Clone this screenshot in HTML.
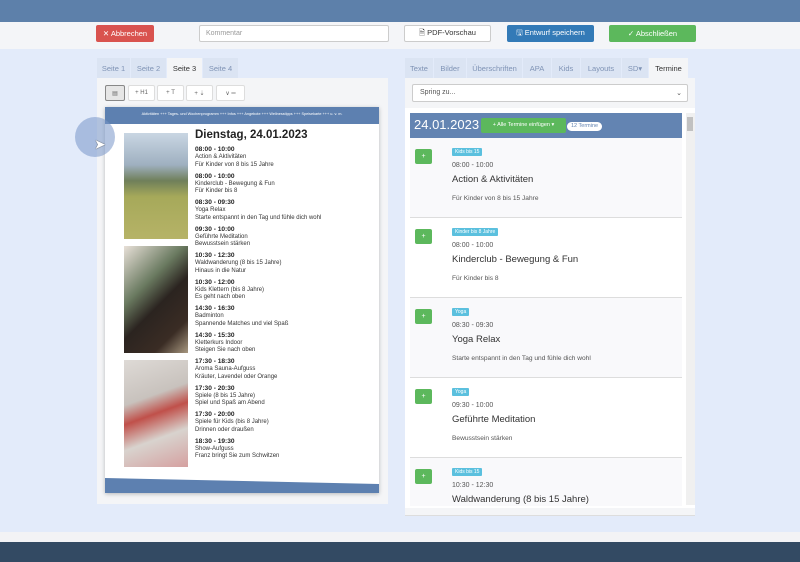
<!DOCTYPE html>
<html><head><meta charset="utf-8"><style>
*{box-sizing:border-box;margin:0;padding:0}
body{width:800px;height:562px;overflow:hidden;background:#e3ebfa;font-family:"Liberation Sans",sans-serif;position:relative}
.a{position:absolute}
.btn{position:absolute;font-size:7.5px;color:#fff;border-radius:2px;display:flex;align-items:center;justify-content:center}
.tab{position:absolute;top:58px;height:20px;font-size:7.5px;color:#7f93b5;display:flex;align-items:center;justify-content:center;background:#dbe4f3}
.tab.on{background:#f4f5f7;color:#333}
.tb{position:absolute;top:85px;height:16px;background:#fff;border:1px solid #ddd;border-radius:2px;font-size:6px;color:#666;display:flex;align-items:center;justify-content:center}
.ev{position:absolute;left:195px;font-size:6px;line-height:7.4px;color:#333}
.ev b{font-size:6.6px;color:#222}
.it{position:absolute;left:410px;width:272px;height:80px;border-bottom:1px solid #ddd;background:#f9f9fb}
.it .p{position:absolute;left:5px;top:11px;width:17px;height:15px;background:#5cb85c;border-radius:2px;color:#fff;font-size:7px;text-align:center;line-height:15px}
.it .lb{position:absolute;left:42px;top:10px;background:#5bc0de;color:#fff;font-size:5px;padding:1px 3px;border-radius:1px}
.it .t{position:absolute;left:42px;top:24px;font-size:7px;color:#555}
.it .h{position:absolute;left:42px;top:36px;font-size:9.5px;color:#333}
.it .d{position:absolute;left:42px;top:57px;font-size:6.6px;color:#555}
</style></head><body>
<div class="a" style="left:0;top:0;width:800px;height:22px;background:#5d80aa"></div>
<div class="a" style="left:0;top:22px;width:800px;height:27px;background:#f4f5f8"></div>
<div class="btn" style="left:96px;top:25px;width:58px;height:17px;background:#d9534f">✕ Abbrechen</div>
<div class="a" style="left:199px;top:25px;width:190px;height:17px;background:#fff;border:1px solid #ccc;border-radius:2px;font-size:7px;color:#999;padding:4px 6px">Kommentar</div>
<div class="btn" style="left:404px;top:25px;width:87px;height:17px;background:#fff;border:1px solid #ccc;color:#333">🗎 PDF-Vorschau</div>
<div class="btn" style="left:507px;top:25px;width:87px;height:17px;background:#337ab7">🖫 Entwurf speichern</div>
<div class="btn" style="left:609px;top:25px;width:87px;height:17px;background:#5cb85c">✓ Abschließen</div>

<div class="tab" style="left:97px;width:33px">Seite 1</div>
<div class="tab" style="left:131px;width:35px">Seite 2</div>
<div class="tab on" style="left:167px;width:35px">Seite 3</div>
<div class="tab" style="left:203px;width:35px">Seite 4</div>
<div class="a" style="left:97px;top:78px;width:291px;height:426px;background:#f4f5f7"></div>
<div class="tb" style="left:105px;top:85px;width:20px;background:#e6e6e6;border-color:#888">▤</div>
<div class="tb" style="left:128px;width:27px">+ H1</div>
<div class="tb" style="left:157px;width:27px">+ T</div>
<div class="tb" style="left:186px;width:27px">+ ⇣</div>
<div class="tb" style="left:216px;width:29px">∨ ═</div>

<div class="a" style="left:105px;top:107px;width:274px;height:386px;background:#fff;box-shadow:0 1px 4px rgba(0,0,0,.25)"></div>
<div class="a" style="left:105px;top:107px;width:274px;height:17px;background:#5d80b0;color:#fff;font-size:3.8px;line-height:15px;text-align:center;white-space:nowrap;overflow:hidden">Aktivitäten +++ Tages- und Wochenprogramm +++ Infos +++ Angebote +++ Wellnesstipps +++ Speisekarte +++ u. v. m.</div>
<div class="a" style="left:105px;top:478px;width:274px;height:15px;background:#5d80b0;clip-path:polygon(0 0,100% 40%,100% 100%,0 100%)"></div>
<div class="a" style="left:124px;top:133px;width:64px;height:106px;background:linear-gradient(#c9d6e3 0%,#9fb0c0 30%,#6f7f5a 45%,#a6a95a 60%,#b6b367 100%)"></div>
<div class="a" style="left:124px;top:246px;width:64px;height:107px;background:linear-gradient(135deg,#e8e0d8 0%,#6a7a60 35%,#2b2420 55%,#3a2c24 80%,#a89880 100%)"></div>
<div class="a" style="left:124px;top:360px;width:64px;height:107px;background:linear-gradient(160deg,#dedad6 0%,#c8c2bd 35%,#c0504a 50%,#d8d3ce 70%,#d5a0a0 100%)"></div>
<div class="a" style="left:195px;top:129px;font-size:11.5px;font-weight:bold;color:#222">Dienstag, 24.01.2023</div>
<div class="ev" style="top:146px"><b>08:00 - 10:00</b><br>Action &amp; Aktivitäten<br>Für Kinder von 8 bis 15 Jahre</div>
<div class="ev" style="top:172.5px"><b>08:00 - 10:00</b><br>Kinderclub - Bewegung &amp; Fun<br>Für Kinder bis 8</div>
<div class="ev" style="top:199px"><b>08:30 - 09:30</b><br>Yoga Relax<br>Starte entspannt in den Tag und fühle dich wohl</div>
<div class="ev" style="top:225.5px"><b>09:30 - 10:00</b><br>Geführte Meditation<br>Bewusstsein stärken</div>
<div class="ev" style="top:252px"><b>10:30 - 12:30</b><br>Waldwanderung (8 bis 15 Jahre)<br>Hinaus in die Natur</div>
<div class="ev" style="top:278.5px"><b>10:30 - 12:00</b><br>Kids Klettern (bis 8 Jahre)<br>Es geht nach oben</div>
<div class="ev" style="top:305px"><b>14:30 - 16:30</b><br>Badminton<br>Spannende Matches und viel Spaß</div>
<div class="ev" style="top:331.5px"><b>14:30 - 15:30</b><br>Kletterkurs Indoor<br>Steigen Sie nach oben</div>
<div class="ev" style="top:358px"><b>17:30 - 18:30</b><br>Aroma Sauna-Aufguss<br>Kräuter, Lavendel oder Orange</div>
<div class="ev" style="top:384.5px"><b>17:30 - 20:30</b><br>Spiele (8 bis 15 Jahre)<br>Spiel und Spaß am Abend</div>
<div class="ev" style="top:411px"><b>17:30 - 20:00</b><br>Spiele für Kids (bis 8 Jahre)<br>Drinnen oder draußen</div>
<div class="ev" style="top:437.5px"><b>18:30 - 19:30</b><br>Show-Aufguss<br>Franz bringt Sie zum Schwitzen</div>
<div class="a" style="left:75px;top:117px;width:40px;height:40px;border-radius:50%;background:rgba(120,150,200,.55)"></div>
<div class="a" style="left:94px;top:136px;font-size:14px;color:#fff;text-shadow:0 0 1px #000">➤</div>

<div class="tab" style="left:405px;width:28px">Texte</div>
<div class="tab" style="left:434px;width:32px">Bilder</div>
<div class="tab" style="left:467px;width:55px">Überschriften</div>
<div class="tab" style="left:523px;width:28px">APA</div>
<div class="tab" style="left:552px;width:28px">Kids</div>
<div class="tab" style="left:581px;width:40px">Layouts</div>
<div class="tab" style="left:622px;width:26px">SD▾</div>
<div class="tab on" style="left:649px;width:39px">Termine</div>
<div class="a" style="left:405px;top:78px;width:290px;height:438px;background:#f4f5f7;border-bottom:1px solid #ddd"></div>
<div class="a" style="left:412px;top:84px;width:276px;height:18px;background:#fff;border:1px solid #ccc;border-radius:2px;font-size:7px;color:#555;padding:4px 7px">Spring zu...<span style="position:absolute;right:5px">⌄</span></div>
<div class="a" style="left:405px;top:108px;width:290px;height:400px;background:#fff;overflow:hidden">
<div class="a" style="left:5px;top:5px;width:272px;height:25px;background:#6384b2"></div>
<div class="a" style="left:9px;top:9px;font-size:13px;color:#fff">24.01.2023</div>
<div class="a" style="left:76px;top:10px;width:85px;height:15px;background:#5cb85c;color:#fff;font-size:5.5px;line-height:15px;text-align:center;border-radius:2px">+ Alle Termine einfügen ▾</div>
<div class="a" style="left:162px;top:14px;height:9px;padding:0 4px;background:#fff;border-radius:5px;color:#6384b2;font-size:5.5px;line-height:9px">12 Termine</div>
<div class="a" style="left:281px;top:5px;width:9px;height:392px;background:#f0f0f0"></div>
<div class="a" style="left:282px;top:9px;width:6px;height:14px;background:#c1c1c1"></div>
</div>
<div class="it" style="top:138px"><div class="p">+</div><div class="lb">Kids bis 15</div><div class="t">08:00 - 10:00</div><div class="h">Action &amp; Aktivitäten</div><div class="d">Für Kinder von 8 bis 15 Jahre</div></div>
<div class="it" style="top:218px;background:#fff"><div class="p">+</div><div class="lb">Kinder bis 8 Jahre</div><div class="t">08:00 - 10:00</div><div class="h">Kinderclub - Bewegung &amp; Fun</div><div class="d">Für Kinder bis 8</div></div>
<div class="it" style="top:298px"><div class="p">+</div><div class="lb">Yoga</div><div class="t">08:30 - 09:30</div><div class="h">Yoga Relax</div><div class="d">Starte entspannt in den Tag und fühle dich wohl</div></div>
<div class="it" style="top:378px;background:#fff"><div class="p">+</div><div class="lb">Yoga</div><div class="t">09:30 - 10:00</div><div class="h">Geführte Meditation</div><div class="d">Bewusstsein stärken</div></div>
<div class="it" style="top:458px;height:48px;border:none"><div class="p">+</div><div class="lb">Kids bis 15</div><div class="t">10:30 - 12:30</div><div class="h">Waldwanderung (8 bis 15 Jahre)</div></div>

<div class="a" style="left:0;top:532px;width:800px;height:10px;background:#f3f3f5"></div>
<div class="a" style="left:0;top:542px;width:800px;height:20px;background:#334a63"></div>
</body></html>
